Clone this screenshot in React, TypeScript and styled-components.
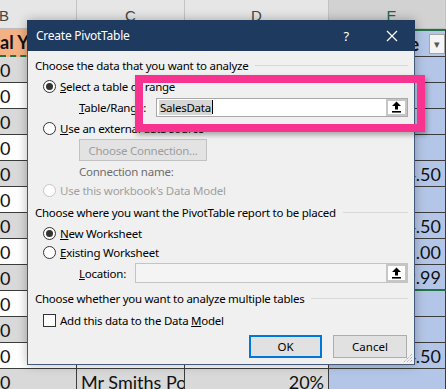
import React from 'react'
import styled, { createGlobalStyle } from 'styled-components'

type Tone = 'gray' | 'white' | 'orange' | 'blue'

const GlobalStyle = createGlobalStyle`
  html, body {
    margin: 0;
    padding: 0;
  }
  body {
    width: 446px;
    height: 389px;
    overflow: hidden;
    background: #ffffff;
  }
`

const toneColor: Record<Tone, string> = {
  gray: '#d9d9d9',
  white: '#ffffff',
  orange: '#f4b183',
  blue: '#b4c6e7',
}

// values visible in column E, keyed by data row index
const priceRows: Record<number, string> = {
  4: '4.50',
  6: '4.50',
  7: '5.00',
  8: '9.99',
  11: '4.50',
}

const App: React.FC = () => {
  const rows = Array.from({ length: 13 }, (_, i) => i)
  return (
    <>
      <GlobalStyle />
      <Page>
        <Sheet>
          <ColHead $align="left">B</ColHead>
          <ColHead>C</ColHead>
          <ColHead>D</ColHead>
          <ColHead $active>E</ColHead>

          <Cell $tone="orange" $bold $ants>
            al Y
          </Cell>
          <Cell $tone="orange" $bold />
          <Cell $tone="orange" $bold />
          <Cell $tone="blue" $bold $align="right" $greenTop>
            e<FilterButton>▾</FilterButton>
          </Cell>

          {rows.map((i) => {
            const tone: Tone = i % 2 === 0 ? 'gray' : 'white'
            return (
              <React.Fragment key={i}>
                <Cell $tone={tone}>0</Cell>
                <Cell $tone={tone}>{i === 12 ? 'Mr Smiths Pot' : ''}</Cell>
                <Cell $tone={tone} $align="right">
                  {i === 12 ? '20%' : ''}
                </Cell>
                <Cell $tone="blue" $align="right" $greenBottom={i === 8}>
                  {priceRows[i] ?? ''}
                </Cell>
              </React.Fragment>
            )
          })}
        </Sheet>

        <Dialog>
          <TitleBar>
            <Title>Create PivotTable</Title>
            <Help>?</Help>
            <CloseIcon width="12" height="12" viewBox="0 0 12 12">
              <path d="M1 1 L11 11 M11 1 L1 11" stroke="#ffffff" strokeWidth="1.2" />
            </CloseIcon>
          </TitleBar>

          <Body>
            <Heading $h={20}>
              <span>Choose the data that you want to analyze</span>
              <Rule />
            </Heading>
            <Row $h={22} $indent={8}>
              <Radio $checked />
              <Label>
                <U>S</U>elect a table or range
              </Label>
            </Row>
            <Row $h={20} $indent={44}>
              <FieldLabel $w={77}>
                <U>T</U>able/Range:
              </FieldLabel>
              <TextBox $h={19}>
                <Selected>SalesData</Selected>
                <Caret />
                <PickButton>
                  <CollapseIcon />
                </PickButton>
              </TextBox>
            </Row>
            <Row $h={22} $indent={8}>
              <Radio />
              <Label>
                <U>U</U>se an external data source
              </Label>
            </Row>
            <Row $h={22} $indent={44}>
              <PlainButton disabled>Choose Connection...</PlainButton>
            </Row>
            <Row $h={20} $indent={44}>
              <Label $muted>Connection name:</Label>
            </Row>
            <Row $h={18} $indent={8}>
              <Radio $disabled />
              <Label $disabled>Use this workbook's Data Model</Label>
            </Row>
            <Heading $h={26}>
              <span>Choose where you want the PivotTable report to be placed</span>
              <Rule />
            </Heading>
            <Row $h={16} $indent={8}>
              <Radio $checked />
              <Label>
                <U>N</U>ew Worksheet
              </Label>
            </Row>
            <Row $h={22} $indent={8}>
              <Radio />
              <Label>
                <U>E</U>xisting Worksheet
              </Label>
            </Row>
            <Row $h={20} $indent={44}>
              <FieldLabel $w={56}>
                <U>L</U>ocation:
              </FieldLabel>
              <TextBox $h={20} $disabled>
                <PickButton>
                  <CollapseIcon />
                </PickButton>
              </TextBox>
            </Row>
            <Heading $h={30}>
              <span>Choose whether you want to analyze multiple tables</span>
              <Rule />
            </Heading>
            <Row $h={14} $indent={8}>
              <Check />
              <Label>
                Add this data to the Data <U>M</U>odel
              </Label>
            </Row>
            <Footer>
              <DialogButton $default>OK</DialogButton>
              <DialogButton>Cancel</DialogButton>
            </Footer>
          </Body>

          <Grip width="10" height="10" viewBox="0 0 10 10">
            <path d="M9 1 L1 9 M9 4 L4 9 M9 7 L7 9" stroke="#9a9a9a" strokeWidth="1" strokeDasharray="1 1" />
          </Grip>
        </Dialog>

        <Highlight />
      </Page>
    </>
  )
}

const CollapseIcon: React.FC = () => (
  <svg width="11" height="12" viewBox="0 0 11 12">
    <path d="M5.5 0.5 L10 5 L7 5 L7 8.5 L4 8.5 L4 5 L1 5 Z" fill="#000000" />
    <rect x="1" y="10" width="9" height="1.6" fill="#000000" />
  </svg>
)

const Page = styled.div`
  position: relative;
  width: 446px;
  height: 389px;
  overflow: hidden;
`

const Sheet = styled.div`
  display: grid;
  grid-template-columns: 77px 108px 144px 117px;
  grid-template-rows: 29px 28px repeat(13, 26px);
  font-family: Lato, 'Liberation Sans', sans-serif;
  font-size: 18px;
  color: #111111;
`

const ColHead = styled.div<{ $align?: 'left'; $active?: boolean }>`
  display: flex;
  align-items: flex-end;
  justify-content: ${(p) => (p.$align === 'left' ? 'flex-start' : 'center')};
  padding: 0 0 4px ${(p) => (p.$active ? '9px' : '0')};
  margin-left: ${(p) => (p.$align === 'left' ? '-1px' : '0')};
  background: ${(p) => (p.$active ? '#d2d2d2' : '#e6e6e6')};
  border-right: 1px solid #c3c3c3;
  border-bottom: 1px solid #bdbdbd;
  font-family: 'Liberation Sans', sans-serif;
  font-size: 15px;
  color: ${(p) => (p.$active ? '#1e6b40' : '#444444')};
`

const Cell = styled.div<{
  $tone: Tone
  $align?: 'right'
  $bold?: boolean
  $ants?: boolean
  $greenTop?: boolean
  $greenBottom?: boolean
}>`
  display: flex;
  align-items: center;
  justify-content: ${(p) => (p.$align === 'right' ? 'flex-end' : 'flex-start')};
  padding: 0 ${(p) => (p.$align === 'right' ? '4px' : '0')} 0 ${(p) => (p.$align === 'right' ? '0' : '4px')};
  background: ${(p) => toneColor[p.$tone]};
  border-right: 1px solid #3c3c3c;
  border-bottom: ${(p) =>
    p.$ants ? '2px dashed #217346' : p.$greenBottom ? '2px solid #217346' : '1px solid #3c3c3c'};
  border-top: ${(p) => (p.$greenTop ? '2px solid #217346' : '0')};
  font-weight: ${(p) => (p.$bold ? 700 : 400)};
  white-space: nowrap;
  overflow: hidden;
  &:nth-child(4n + 1) {
    padding-left: 0;
  }
`

const FilterButton = styled.span`
  display: flex;
  align-items: center;
  justify-content: center;
  width: 14px;
  height: 18px;
  margin-left: 10px;
  margin-right: -4px;
  background: #f4f4f4;
  border: 1px solid #a6a6a6;
  font-size: 11px;
  font-weight: 400;
  color: #555555;
`

const Dialog = styled.div`
  position: absolute;
  left: 27px;
  top: 20px;
  width: 388px;
  height: 345px;
  box-sizing: border-box;
  display: flex;
  flex-direction: column;
  background: #f0f0f0;
  border: 1px solid #44597a;
  box-shadow: 0 0 10px rgba(0, 0, 0, 0.28);
  font-family: 'Noto Sans', 'Open Sans', sans-serif;
  font-size: 11.5px;
  letter-spacing: -0.25px;
  color: #000000;
`

const TitleBar = styled.div`
  display: flex;
  align-items: center;
  height: 31px;
  margin: -1px -1px 0;
  padding: 0 17px 0 9px;
  background: #1e3a5f;
  color: #ffffff;
`

const Title = styled.span`
  flex: 1;
  font-size: 12px;
`

const Help = styled.span`
  margin-right: 37px;
  font-size: 13px;
`

const CloseIcon = styled.svg`
  display: block;
`

const Body = styled.div`
  display: flex;
  flex-direction: column;
  padding: 4px 6px 0 7px;
`

const Heading = styled.div<{ $h: number }>`
  display: flex;
  align-items: center;
  gap: 7px;
  height: ${(p) => p.$h}px;
  white-space: nowrap;
`

const Rule = styled.span`
  flex: 1;
  height: 1px;
  background: #d9d9d9;
`

const Row = styled.div<{ $h: number; $indent: number }>`
  display: flex;
  align-items: center;
  height: ${(p) => p.$h}px;
  padding-left: ${(p) => p.$indent}px;
  white-space: nowrap;
`

const Radio = styled.span<{ $checked?: boolean; $disabled?: boolean }>`
  position: relative;
  flex: none;
  width: 13px;
  height: 13px;
  box-sizing: border-box;
  margin-right: 4px;
  border-radius: 50%;
  border: 1px solid ${(p) => (p.$disabled ? '#c6c6c6' : '#333333')};
  background: #ffffff;
  &::after {
    content: '';
    display: ${(p) => (p.$checked ? 'block' : 'none')};
    position: absolute;
    left: 2px;
    top: 2px;
    width: 7px;
    height: 7px;
    border-radius: 50%;
    background: #333333;
  }
`

const Check = styled.span`
  flex: none;
  width: 13px;
  height: 13px;
  box-sizing: border-box;
  margin-right: 4px;
  border: 1px solid #333333;
  background: #ffffff;
`

const Label = styled.span<{ $disabled?: boolean; $muted?: boolean }>`
  color: ${(p) => (p.$disabled ? '#a0a0a0' : p.$muted ? '#6d6d6d' : '#000000')};
`

const U = styled.span`
  text-decoration: underline;
`

const FieldLabel = styled.span<{ $w: number }>`
  flex: none;
  width: ${(p) => p.$w}px;
`

const TextBox = styled.div<{ $h: number; $disabled?: boolean }>`
  flex: 1;
  display: flex;
  align-items: center;
  height: ${(p) => p.$h}px;
  box-sizing: border-box;
  padding-left: 2px;
  background: ${(p) => (p.$disabled ? '#f4f4f4' : '#ffffff')};
  border: 1px solid ${(p) => (p.$disabled ? '#c4c4c4' : '#a9a9a9')};
`

const Selected = styled.span`
  padding: 0 1px;
  background: #d6d6d6;
  line-height: 15px;
`

const Caret = styled.span`
  width: 1px;
  height: 14px;
  background: #000000;
`

const PickButton = styled.span`
  display: flex;
  align-items: center;
  justify-content: center;
  width: 21px;
  height: 100%;
  box-sizing: border-box;
  margin-left: auto;
  background: #ffffff;
  border: 2px solid #c6c6c6;
`

const PlainButton = styled.button`
  width: 128px;
  height: 22px;
  padding: 0;
  background: #e3e3e3;
  border: 1px solid #c2c2c2;
  font-family: inherit;
  font-size: 11.5px;
  letter-spacing: -0.25px;
  color: #9d9d9d;
`

const Footer = styled.div`
  display: flex;
  justify-content: flex-end;
  gap: 11px;
  margin-top: 8px;
  padding-right: 1px;
`

const DialogButton = styled.button<{ $default?: boolean }>`
  width: ${(p) => (p.$default ? '73px' : '74px')};
  height: 23px;
  padding: 0;
  box-sizing: border-box;
  background: #e1e1e1;
  border: ${(p) => (p.$default ? '2px solid #0078d7' : '1px solid #adadad')};
  font-family: inherit;
  font-size: 11.5px;
  color: #000000;
`

const Grip = styled.svg`
  position: absolute;
  right: 1px;
  bottom: 1px;
`

const Highlight = styled.div`
  position: absolute;
  left: 135px;
  top: 75px;
  width: 290px;
  height: 57px;
  box-sizing: border-box;
  border: 8px solid #f8338f;
  box-shadow: 2px 3px 5px rgba(0, 0, 0, 0.3);
`

export default App
